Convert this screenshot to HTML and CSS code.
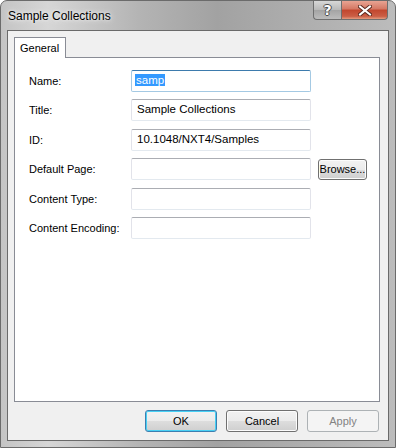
FILE: index.html
```html
<!DOCTYPE html>
<html>
<head>
    <meta charset="UTF-8">
    <title>Sample Collections</title>
    <link rel="stylesheet" href="styles.css">
</head>
<body>
    <div class="window">
        <div class="titlebar">
            <span class="title">Sample Collections</span>
            <div class="caption-buttons">
                <span class="cap-btn help">?</span>
                <span class="cap-btn close">
                    <svg width="14" height="11" viewBox="0 0 14 11">
                        <path d="M2 1.5 L12 9.5 M12 1.5 L2 9.5" stroke="#5a2a20" stroke-width="4" stroke-linecap="square"/>
                        <path d="M2 1.5 L12 9.5 M12 1.5 L2 9.5" stroke="#ffffff" stroke-width="2" stroke-linecap="square"/>
                    </svg>
                </span>
            </div>
        </div>

        <div class="client">
            <div class="tabs">
                <div class="tab">General</div>
            </div>

            <div class="panel">
                <div class="form-row">
                    <label for="name">Name:</label>
                    <div class="field focused"><span class="selected">samp</span></div>
                </div>
                <div class="form-row">
                    <label for="title">Title:</label>
                    <div class="field">Sample Collections</div>
                </div>
                <div class="form-row">
                    <label for="id">ID:</label>
                    <div class="field">10.1048/NXT4/Samples</div>
                </div>
                <div class="form-row">
                    <label for="page">Default Page:</label>
                    <div class="field"></div>
                    <button class="btn browse">Browse...</button>
                </div>
                <div class="form-row">
                    <label for="type">Content Type:</label>
                    <div class="field"></div>
                </div>
                <div class="form-row">
                    <label for="enc">Content Encoding:</label>
                    <div class="field"></div>
                </div>
            </div>

            <div class="actions">
                <button class="btn default">OK</button>
                <button class="btn">Cancel</button>
                <button class="btn disabled">Apply</button>
            </div>
        </div>
    </div>
</body>
</html>
```

FILE: styles.css
```css
body {
    margin: 0;
    font-family: 'Liberation Sans', Arial, sans-serif;
    font-size: 11px;
    color: #000;
    background: #ffffff;
}

.window {
    width: 396px;
    height: 448px;
    box-sizing: border-box;
    display: flex;
    flex-direction: column;
    border: 1px solid #6b6b6b;
    border-radius: 7px 7px 0 0;
    background: linear-gradient(90deg, #c4c4c4 0%, #d6d6d6 12%, #b4b4b4 35%, #a2a2a2 55%, #b0b0b0 80%, #bcbcbc 100%);
    padding: 0 6px 6px 6px;
}

.titlebar {
    height: 29px;
    display: flex;
    align-items: flex-start;
    justify-content: space-between;
}

.title {
    font-size: 12px;
    color: #000;
    margin: 8px 0 0 1px;
    text-shadow: 0 0 6px #eeeeee, 0 0 3px #f4f4f4;
}

.caption-buttons {
    display: flex;
    margin-right: 1px;
}

.cap-btn {
    height: 19px;
    display: flex;
    align-items: center;
    justify-content: center;
    border: 1px solid #6f6f6f;
    border-top: none;
    box-sizing: border-box;
}

.help {
    width: 28px;
    border-radius: 0 0 0 4px;
    border-right: none;
    background: linear-gradient(#d8d8d8, #b8b8b8 50%, #a4a4a4 51%, #bcbcbc);
    color: #ffffff;
    font-family: 'DejaVu Sans', sans-serif;
    font-weight: bold;
    font-size: 14px;
    text-shadow: 1px 0 0 #4a4a4a, -1px 0 0 #4a4a4a, 0 1px 0 #4a4a4a, 0 -1px 0 #4a4a4a;
}

.close {
    width: 47px;
    border-radius: 0 0 4px 0;
    background: linear-gradient(#e8a493, #d47763 45%, #c2462e 50%, #cb5e45 85%, #e59c80);
}

.client {
    flex: 1;
    display: flex;
    flex-direction: column;
    background: #f0f0f0;
    border: 1px solid #6a6a6a;
    padding: 6px 8px 8px 6px;
}

.tabs {
    display: flex;
    height: 20px;
}

.tab {
    width: 52px;
    box-sizing: border-box;
    border: 1px solid #898c95;
    border-bottom: none;
    background: #ffffff;
    padding: 4px 0 0 5px;
    font-size: 11px;
    margin-bottom: -1px;
    position: relative;
    z-index: 1;
}

.panel {
    flex: 1;
    background: #ffffff;
    border: 1px solid #898c95;
    padding: 12px 0 0 14px;
    display: flex;
    flex-direction: column;
    gap: 7.4px;
}

.form-row {
    display: flex;
    align-items: center;
    height: 22px;
}

label {
    width: 102px;
    font-size: 11px;
    color: #000;
}

.field {
    width: 180px;
    height: 22px;
    box-sizing: border-box;
    border: 1px solid #e2e3ea;
    border-top-color: #abadb3;
    border-bottom-color: #e3e9ef;
    border-radius: 2px;
    padding: 3px 0 0 5px;
    font-size: 11.5px;
    color: #000;
    background: #ffffff;
}

.field.focused {
    border-color: #a4c9e3;
    border-top-color: #3d7bad;
    padding-left: 3px;
}

.selected {
    background: #3399ff;
    color: #ffffff;
    padding: 0 1px;
}

.btn {
    font-family: 'Liberation Sans', Arial, sans-serif;
    font-size: 11px;
    color: #000;
    height: 22px;
    width: 72px;
    box-sizing: border-box;
    border: 1px solid #707070;
    border-radius: 3px;
    background: linear-gradient(#f2f2f2, #ebebeb 50%, #dddddd 51%, #cfcfcf);
    box-shadow: inset 0 0 0 1px #fcfcfc;
    padding: 0;
}

.browse {
    width: 49px;
    height: 21px;
    margin-left: 7px;
}

.actions {
    display: flex;
    justify-content: flex-end;
    gap: 9px;
    padding-top: 8px;
    padding-right: 1px;
}

.default {
    border-color: #3c7fb1;
    box-shadow: inset 0 0 0 1px #48d0f4;
}

.disabled {
    border-color: #adb2b5;
    background: #f4f4f4;
    box-shadow: none;
    color: #838383;
}
```
